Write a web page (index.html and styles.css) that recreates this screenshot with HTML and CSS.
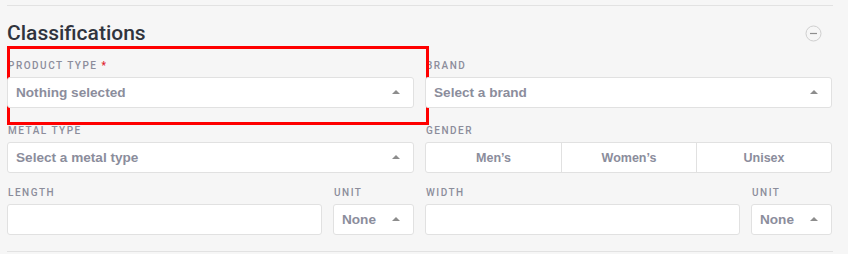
FILE: index.html
```html
<!DOCTYPE html>
<html>
<head>
  <title>Classifications</title>
  <link rel="stylesheet" href="styles.css">
</head>
<body>
  <section class="panel">
    <div class="panel-head">
      <h2>Classifications</h2>
      <button type="button" class="collapse-btn" aria-label="Collapse">
        <svg width="17" height="17" viewBox="0 0 17 17">
          <circle cx="8.5" cy="8.5" r="7.5" fill="none" stroke="#cfcfcf" stroke-width="1"/>
          <line x1="5" y1="8.5" x2="12" y2="8.5" stroke="#8e8e8e" stroke-width="1.2"/>
        </svg>
      </button>
    </div>

    <div class="fields">
      <div class="highlight"></div>

      <div class="field">
        <label>Product type <span class="req">*</span></label>
        <div class="select">Nothing selected<span class="caret"></span></div>
      </div>
      <div class="field">
        <label>Brand</label>
        <div class="select">Select a brand<span class="caret"></span></div>
      </div>

      <div class="field">
        <label>Metal type</label>
        <div class="select">Select a metal type<span class="caret"></span></div>
      </div>
      <div class="field">
        <label>Gender</label>
        <div class="segmented">
          <button type="button">Men’s</button>
          <button type="button">Women’s</button>
          <button type="button">Unisex</button>
        </div>
      </div>

      <div class="field measure">
        <div>
          <label>Length</label>
          <input type="text" class="text-input">
        </div>
        <div>
          <label>Unit</label>
          <div class="select unit">None<span class="caret"></span></div>
        </div>
      </div>
      <div class="field measure">
        <div>
          <label>Width</label>
          <input type="text" class="text-input">
        </div>
        <div>
          <label>Unit</label>
          <div class="select unit">None<span class="caret"></span></div>
        </div>
      </div>
    </div>
  </section>
</body>
</html>
```

FILE: styles.css
```css
body {
  margin: 0;
  padding: 5px 15px 0 7px;
  background-color: #f6f6f6;
  font-family: Roboto, "Liberation Sans", Arial, sans-serif;
  color: #333840;
}

.panel {
  border-top: 1px solid #e2e2e2;
  border-bottom: 1px solid #e2e2e2;
  padding-bottom: 16px;
}

.panel-head {
  display: flex;
  align-items: center;
  justify-content: space-between;
  margin-top: 15px;
  height: 24px;
}

.panel-head h2 {
  margin: 0;
  font-size: 21px;
  font-weight: 500;
  line-height: 24px;
  color: #30343d;
}

.collapse-btn {
  background: none;
  border: none;
  padding: 0;
  margin-right: 11px;
  width: 17px;
  height: 17px;
  cursor: pointer;
}

.collapse-btn svg {
  display: block;
}

.fields {
  position: relative;
  display: grid;
  grid-template-columns: 407px 407px;
  column-gap: 11px;
  row-gap: 13px;
  margin-top: 14px;
}

/* red annotation round the first field */
.highlight {
  position: absolute;
  left: 0;
  top: -13px;
  width: 416px;
  height: 73px;
  border: 3px solid #ff0000;
  pointer-events: none;
}

.field:nth-child(2),
.field:nth-child(3) {
  margin-bottom: 3px;
}

.field label {
  display: block;
  font-size: 10px;
  font-weight: 500;
  letter-spacing: 1.5px;
  line-height: 14px;
  text-transform: uppercase;
  color: #8c8d9b;
  margin-bottom: 4px;
  padding-left: 1px;
}

.req {
  color: #e0202a;
}

.select {
  position: relative;
  box-sizing: border-box;
  height: 31px;
  padding: 0 30px 0 8px;
  background-color: #fff;
  border: 1px solid #e1e1e1;
  border-radius: 3px;
  font-family: "Liberation Sans", Arial, sans-serif;
  font-size: 13.6px;
  font-weight: bold;
  line-height: 29px;
  color: #8b8d9c;
  white-space: nowrap;
}

.caret {
  position: absolute;
  right: 13px;
  top: 12px;
  width: 0;
  height: 0;
  border-left: 4px solid transparent;
  border-right: 4px solid transparent;
  border-bottom: 4px solid #8d8d8d;
}

.segmented {
  display: grid;
  grid-template-columns: 1fr 1fr 1fr;
  box-sizing: border-box;
  height: 31px;
  background-color: #fff;
  border: 1px solid #e1e1e1;
  border-radius: 3px;
}

.segmented button {
  background: none;
  border: none;
  border-left: 1px solid #e1e1e1;
  font-family: "Liberation Sans", Arial, sans-serif;
  font-size: 12.5px;
  font-weight: bold;
  color: #8b8d9c;
  padding: 0;
  cursor: pointer;
}

.segmented button:first-child {
  border-left: none;
}

.measure {
  display: grid;
  grid-template-columns: 1fr 81px;
  column-gap: 11px;
}

.text-input {
  display: block;
  box-sizing: border-box;
  width: 100%;
  height: 31px;
  background-color: #fff;
  border: 1px solid #e1e1e1;
  border-radius: 3px;
  font-family: inherit;
}

.select.unit {
  padding-left: 8px;
}
```
